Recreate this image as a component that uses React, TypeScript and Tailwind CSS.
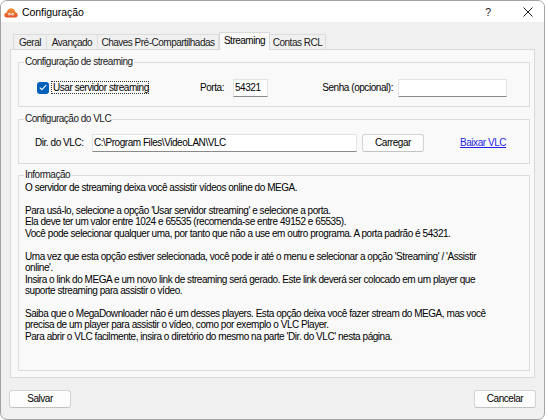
import React from "react";

const SEG = "font-['Liberation_Sans',Arial,sans-serif] text-[10px] tracking-[-0.5px]";
const NARROW = "font-['Liberation_Sans',Arial,sans-serif] text-[10px] tracking-[-0.45px] text-black";

function CloudIcon() {
  return (
    <svg width="14" height="11" viewBox="0 0 14 11" className="ml-[3px] mt-[1px]">
      <defs>
        <linearGradient id="cg" x1="0" y1="0" x2="0" y2="1">
          <stop offset="0" stopColor="#f49a3c" />
          <stop offset="1" stopColor="#e4502a" />
        </linearGradient>
      </defs>
      <path
        d="M3 10.5 C1.2 10.5 0.3 9.3 0.3 8 C0.3 6.6 1.4 5.6 2.7 5.6 C3 3.2 4.8 1.2 7.2 1.2 C9.5 1.2 11.2 3 11.4 5.2 C12.8 5.4 13.7 6.6 13.7 7.9 C13.7 9.4 12.6 10.5 11.1 10.5 Z"
        fill="url(#cg)"
      />
      <path d="M5 8.6 L5 6 L7 7.6 L9 6 L9 8.6" stroke="#fff" strokeWidth="1" fill="none" strokeLinejoin="round" />
    </svg>
  );
}

function Tab({ label, w, selected }: { label: string; w: number; selected?: boolean }) {
  if (selected) {
    return (
      <div
        className={`relative z-10 h-[18px] -mb-px bg-[#f9f9f9] border border-b-0 border-[#d9d9d9] flex items-start justify-center pt-[2px] leading-[12px] text-black whitespace-nowrap ${SEG}`}
        style={{ width: w }}
      >
        {label}
      </div>
    );
  }
  return (
    <div
      className={`h-[15px] bg-[#f0f0f0] border border-b-0 border-[#dcdcdc] -ml-px flex items-start justify-center pt-[2px] leading-[12px] text-[#1a1a1a] whitespace-nowrap ${SEG}`}
      style={{ width: w }}
    >
      {label}
    </div>
  );
}

function Legend({ children }: { children: React.ReactNode }) {
  return (
    <legend className={`ml-[5px] px-[1px] leading-[14px] text-[#1a1a1a] ${SEG}`}>
      {children}
    </legend>
  );
}

function Button({ label, className = "" }: { label: string; className?: string }) {
  return (
    <div
      className={`h-[18px] w-[62px] bg-[#fdfdfd] border border-[#d3d3d3] border-b-[#c2c2c2] rounded-[3px] flex items-center justify-center leading-[12px] ${NARROW} ${className}`}
    >
      {label}
    </div>
  );
}

const info: string[] = [
  "O servidor de streaming deixa você assistir vídeos online do MEGA.",
  "",
  "Para usá-lo, selecione a opção 'Usar servidor streaming' e selecione a porta.",
  "Ela deve ter um valor entre 1024 e 65535 (recomenda-se entre 49152 e 65535).",
  "Você pode selecionar qualquer uma, por tanto que não a use em outro programa. A porta padrão é 54321.",
  "",
  "Uma vez que esta opção estiver selecionada, você pode ir até o menu e selecionar a opção 'Streaming' / 'Assistir",
  "online'.",
  "Insira o link do MEGA e um novo link de streaming será gerado. Este link deverá ser colocado em um player que",
  "suporte streaming para assistir o vídeo.",
  "",
  "Saiba que o MegaDownloader não é um desses players. Esta opção deixa você fazer stream do MEGA, mas você",
  "precisa de um player para assistir o vídeo, como por exemplo o VLC Player.",
  "Para abrir o VLC facilmente, insira o diretório do mesmo na parte 'Dir. do VLC' nesta página.",
];

export default function App() {
  return (
    <div className="w-[548px] h-[420px] bg-white overflow-hidden">
      <div className="w-[545px] h-[420px] rounded-[7px] border border-[#a3a3a3] bg-[#f0f0f0] flex flex-col overflow-hidden">
        {/* Title bar */}
        <div className="h-[21px] bg-white flex items-center shrink-0">
          <CloudIcon />
          <span className="ml-[4px] font-['Liberation_Sans',Arial,sans-serif] text-[10.5px] tracking-[-0.05px] leading-[14px] text-black">
            Configuração
          </span>
          <div className="flex-1" />
          <span className="font-['Liberation_Sans',Arial,sans-serif] text-[10.5px] leading-[14px] text-[#1a1a1a] mr-[32px]">
            ?
          </span>
          <svg width="10" height="10" viewBox="0 0 10 10" className="mr-[11px]">
            <path d="M0.5 0.5 L9.5 9.5 M9.5 0.5 L0.5 9.5" stroke="#1a1a1a" strokeWidth="1" />
          </svg>
        </div>

        {/* Tabs */}
        <div className="mt-[10px] ml-[9px] flex items-end h-[17px]">
          <div className="w-[4px]" />
          <Tab label="Geral" w={34} />
          <Tab label="Avançado" w={52} />
          <Tab label="Chaves Pré-Compartilhadas" w={122} />
          <Tab label="Streaming" w={51} selected />
          <Tab label="Contas RCL" w={57} />
        </div>

        {/* Panel */}
        <div className="ml-[9px] w-[525px] h-[329px] bg-[#f9f9f9] border border-[#d9d9d9] pt-[5px] pl-[7px] flex flex-col">
          {/* Group 1 */}
          <fieldset className="w-[512px] border border-[#dcdcdc] p-0 m-0 min-w-0">
            <Legend>Configuração de streaming</Legend>
            <div className="h-[37px] flex items-center">
              <div className="ml-[18px] w-[12px] h-[12px] rounded-[3px] bg-[#005fb8] flex items-center justify-center">
                <svg width="8" height="7" viewBox="0 0 8 7">
                  <path d="M0.8 3.6 L2.9 5.6 L7.2 1.1" stroke="#fff" strokeWidth="1.1" fill="none" />
                </svg>
              </div>
              <div className={`ml-[2px] w-[98px] h-[13px] border border-dotted border-[#333] flex items-center pl-[1px] leading-[12px] whitespace-nowrap ${NARROW}`}>
                Usar servidor streaming
              </div>
              <div className={`ml-[51px] w-[33px] leading-[14px] whitespace-nowrap ${NARROW}`}>Porta:</div>
              <div className={`w-[35px] h-[18px] bg-white border border-[#e3e3e3] border-b-[#8a8a8a] flex items-center pl-[1px] leading-[14px] ${NARROW}`}>
                54321
              </div>
              <div className={`ml-[32px] w-[98px] pr-[5px] text-right leading-[14px] whitespace-nowrap ${NARROW}`}>
                Senha (opcional):
              </div>
              <div className="w-[109px] h-[18px] bg-white border border-[#e3e3e3] border-b-[#8a8a8a]" />
            </div>
          </fieldset>

          {/* Group 2 */}
          <fieldset className="mt-[5px] w-[512px] border border-[#dcdcdc] p-0 m-0 min-w-0">
            <Legend>Configuração do VLC</Legend>
            <div className="h-[37px] flex items-start pt-[8px]">
              <div className={`ml-[16px] w-[57px] h-[18px] flex items-center leading-[14px] whitespace-nowrap ${NARROW}`}>
                Dir. do VLC:
              </div>
              <div className={`w-[265px] h-[18px] bg-white border border-[#e3e3e3] border-b-[#8a8a8a] flex items-center pl-[1px] leading-[14px] whitespace-nowrap ${NARROW}`}>
                C:\Program Files\VideoLAN\VLC
              </div>
              <Button label="Carregar" className="ml-[5px]" />
              <div className={`ml-[36px] h-[18px] flex items-center leading-[14px] whitespace-nowrap underline ${NARROW} !text-[#1f1fe0]`}>
                Baixar VLC
              </div>
            </div>
          </fieldset>

          {/* Group 3 */}
          <fieldset className="mt-[4px] w-[512px] border border-[#dcdcdc] p-0 m-0 min-w-0">
            <Legend>Informação</Legend>
            <div className={`h-[188px] pl-[6px] leading-[11.46px] ${NARROW}`}>
              {info.map((line, i) => (
                <div key={i} className="h-[11.46px] whitespace-pre">
                  {line}
                </div>
              ))}
            </div>
          </fieldset>
        </div>

        {/* Buttons */}
        <div className="mt-[12px] flex px-[8px]">
          <Button label="Salvar" />
          <div className="flex-1" />
          <Button label="Cancelar" />
        </div>
      </div>
    </div>
  );
}
